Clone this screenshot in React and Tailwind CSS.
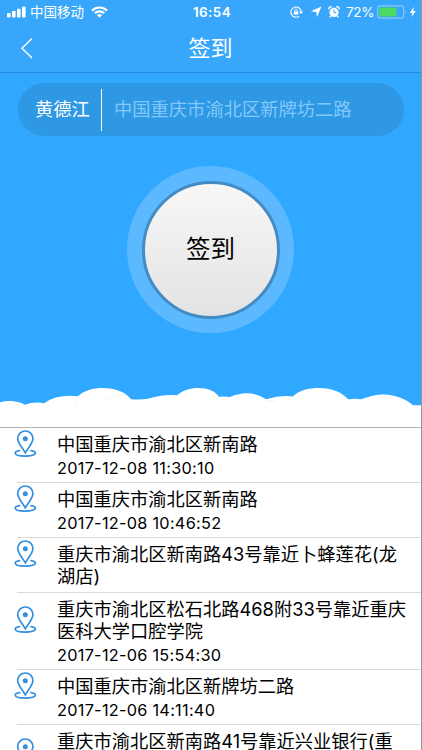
import { useState } from "react";

const fontStack = "font-['Inter','Noto_Sans_CJK_SC',sans-serif]";

const records = [
  { id: 1, lines: ["中国重庆市渝北区新南路"], time: "2017-12-08 11:30:10", height: "h-[55px]", pin: "mt-[2px]" },
  { id: 2, lines: ["中国重庆市渝北区新南路"], time: "2017-12-08 10:46:52", height: "h-[55px]", pin: "mt-[2px]" },
  { id: 3, lines: ["重庆市渝北区新南路43号靠近卜蜂莲花(龙", "湖店)"], height: "h-[55px]", pin: "mt-[2px]" },
  { id: 4, lines: ["重庆市渝北区松石北路468附33号靠近重庆", "医科大学口腔学院"], time: "2017-12-06 15:54:30", height: "h-[77px]", pin: "mt-[13px]" },
  { id: 5, lines: ["中国重庆市渝北区新牌坊二路"], time: "2017-12-06 14:11:40", height: "h-[55px]", pin: "mt-[2px]" },
  { id: 6, lines: ["重庆市渝北区新南路41号靠近兴业银行(重"], height: "h-[77px]", pin: "mt-[13px]" },
];

function StatusBar() {
  return (
    <div className="grid h-6 grid-cols-[1fr_auto_1fr] items-center pl-[7px] pr-[4px]">
      <div className="flex items-center">
        <svg width="19" height="12" viewBox="0 0 19 12" fill="#fff">
          <rect x="0" y="7" width="3.6" height="4.5" rx="1" />
          <rect x="5" y="5" width="3.6" height="6.5" rx="1" />
          <rect x="10" y="2.8" width="3.6" height="8.7" rx="1" />
          <rect x="15" y="0.5" width="3.6" height="11" rx="1" />
        </svg>
        <span className="ml-[4px] text-[13.5px] leading-6">中国移动</span>
        <svg className="ml-[7px]" width="17" height="12" viewBox="0 0 17 12" fill="none" stroke="#fff" strokeWidth="2.2">
          <path d="M1 4.6a10.6 10.6 0 0 1 15 0" />
          <path d="M3.8 7.3a6.7 6.7 0 0 1 9.4 0" />
          <path d="M8.5 11.7L5.9 9.1a3.8 3.8 0 0 1 5.2 0z" fill="#fff" stroke="none" />
        </svg>
      </div>
      <span className="text-[13.5px] font-semibold leading-6 tracking-[0.4px]">16:54</span>
      <div className="flex items-center justify-end">
        <svg width="13" height="12" viewBox="0 0 13 12" fill="none" stroke="#fff">
          <path d="M9.2 10.1A5.1 5.1 0 1 1 11.1 5.5" strokeWidth="1.1" />
          <path d="M9 5.4h4L11 8z" fill="#fff" stroke="none" />
          <rect x="3.8" y="5.3" width="4.4" height="3.3" fill="#fff" stroke="none" />
          <path d="M4.8 5.6V4.4a1.2 1.2 0 0 1 2.4 0v1.2" strokeWidth="0.9" />
        </svg>
        <svg className="ml-[7px]" width="12" height="12" viewBox="0 0 12 12" fill="#fff">
          <path d="M11.4 0.6L7 11.2 6.3 6 0.8 5.3z" />
        </svg>
        <svg className="ml-[6px]" width="12" height="12" viewBox="0 0 12 12">
          <circle cx="6" cy="6.4" r="4.6" fill="#fff" />
          <path d="M0.9 3.3A2 2 0 0 1 3.7 1M8.3 1a2 2 0 0 1 2.8 2.3M2.8 10l-1.1 1.4M9.2 10l1.1 1.4" fill="none" stroke="#fff" strokeWidth="1.4" />
          <path d="M6 3.5v3.1h2.3" fill="none" stroke="#38a7fb" strokeWidth="1" />
        </svg>
        <span className="ml-[6px] text-[13.5px] leading-6 tracking-[-0.4px]">72%</span>
        <svg className="ml-[3px]" width="31" height="14" viewBox="0 0 31 14">
          <rect x="0.6" y="0.9" width="26" height="12.2" rx="2.4" fill="none" stroke="#85c8fb" strokeWidth="1.1" />
          <rect x="2.2" y="2.5" width="17.2" height="9" rx="1" fill="#4bd964" />
          <path d="M28 5q1.5 2 0 4z" fill="#85c8fb" />
        </svg>
        <svg className="ml-[1px]" width="8" height="12" viewBox="0 0 8 12" fill="#fff">
          <path d="M5 0.8L0.8 6.8h2.5L2.4 11 6.8 5H4.2z" />
        </svg>
      </div>
    </div>
  );
}

function PinIcon() {
  return (
    <svg width="24" height="28" viewBox="0 0 24 28" fill="none" stroke="#338fe0" strokeWidth="1.7" strokeLinecap="round">
      <path d="M12.3 22.8C9.6 18 4.7 13.3 4.7 8.6a7.6 7.6 0 0 1 15.200 0C19.900 13.300 15 18 12.300 22.800z" />
      <circle cx="12.3" cy="8.7" r="2.5" fill="#338fe0" stroke="none" />
      <path d="M6.6 20.6C3.8 21 2.2 21.9 2.2 23c0 1.9 4.200 3.100 10.100 3.100S22.400 24.900 22.400 23c0-1.100-1.600-2-4.400-2.400" />
    </svg>
  );
}

function Clouds() {
  return (
    <svg className="block" width="422" height="41" viewBox="0 0 422 41">
      <path
        fill="#fff"
        d="M0 16.2Q14 13 25 18.7Q34 15.5 44 17.2Q57 8 78 10.2C85 4 93 2 103 2C115 2 126 6 131 13.2Q140 14 148 12.8Q162 8 177 9.2C183 4 190 2 198 2C208 2 215 5 219 10.8Q225 10 230 11Q250 2.5 266 13.3Q280 9 293 10.5C299 4 309 2 319 2C332 2 342 6 348 13.3Q355 12 361 13.3C372 9.5 377 8.5 384 8.5C396 9 406 13 413 19.3H422V41H0z"
      />
      <path d="M77 12q-2 3 0 6M107 13q8-5 18-4M267 14q4 1 8 .5" fill="none" stroke="#f3f4f5" />
    </svg>
  );
}

function RecordRow({ record }) {
  return (
    <li className={`flex shrink-0 pl-[13px] ${record.height}`}>
      <div className={`w-6 shrink-0 ${record.pin}`}>
        <PinIcon />
      </div>
      <div className="ml-5 flex-1 whitespace-nowrap pt-[5px] text-black">
        {record.lines.map((line) => (
          <p key={line} className="text-[18.25px] leading-[22px]">{line}</p>
        ))}
        {record.time && <p className="mt-[2px] text-[16.3px] leading-[22px] tracking-[0.27px]">{record.time}</p>}
      </div>
    </li>
  );
}

export default function App() {
  const [address] = useState("中国重庆市渝北区新牌坊二路");

  return (
    <div className={`flex h-[750px] w-[422px] flex-col overflow-hidden border-r border-[#929699] bg-white ${fontStack}`}>
      <header className="h-[73px] shrink-0 border-b border-[#238ddd] bg-[#38a7fb] text-white">
        <StatusBar />
        <div className="grid h-[47px] grid-cols-[1fr_auto_1fr] items-center pl-[20px] pr-[20px]">
          <button type="button" aria-label="返回" className="w-4">
            <svg width="14" height="22" viewBox="0 0 14 22" fill="none" stroke="#fff" strokeWidth="1.4">
              <path d="M12 1.5L2 11.3 12 21" />
            </svg>
          </button>
          <h1 className="text-[22px] leading-8">签到</h1>
        </div>
      </header>

      <section className="flex h-[354px] shrink-0 flex-col bg-[#31a8ff]">
        <div className="ml-[18px] mt-[10px] flex h-[53px] w-[386px] shrink-0 items-center rounded-full bg-[#2e98e4] pl-[17px] text-[18.3px]">
          <span className="w-[66px] pt-px text-white">黄德江</span>
          <span className="h-[42px] w-px bg-white" />
          <span className="ml-[12px] pt-px text-[#82c8fb]">{address}</span>
        </div>

        <div className="mx-auto mt-[30px] flex size-[167px] shrink-0 items-center justify-center rounded-full bg-[#5cb9ff]">
          <button
            type="button"
            className="size-[138px] rounded-full border-[3px] border-[#438bc2] bg-linear-to-b from-[#f7f7f7] to-[#e3e3e3] text-[24.5px] text-black"
          >
            签到
          </button>
        </div>

        <div className="mt-auto">
          <Clouds />
        </div>
      </section>

      <ul className="flex min-h-0 flex-1 flex-col overflow-hidden border-t border-[#b3b3b3]">
        {records.map((record, i) => (
          <div key={record.id} className="shrink-0">
            {i > 0 && <div className="-mt-px ml-[17px] h-px bg-[#d9d9d9]" />}
            <RecordRow record={record} />
          </div>
        ))}
      </ul>
    </div>
  );
}
